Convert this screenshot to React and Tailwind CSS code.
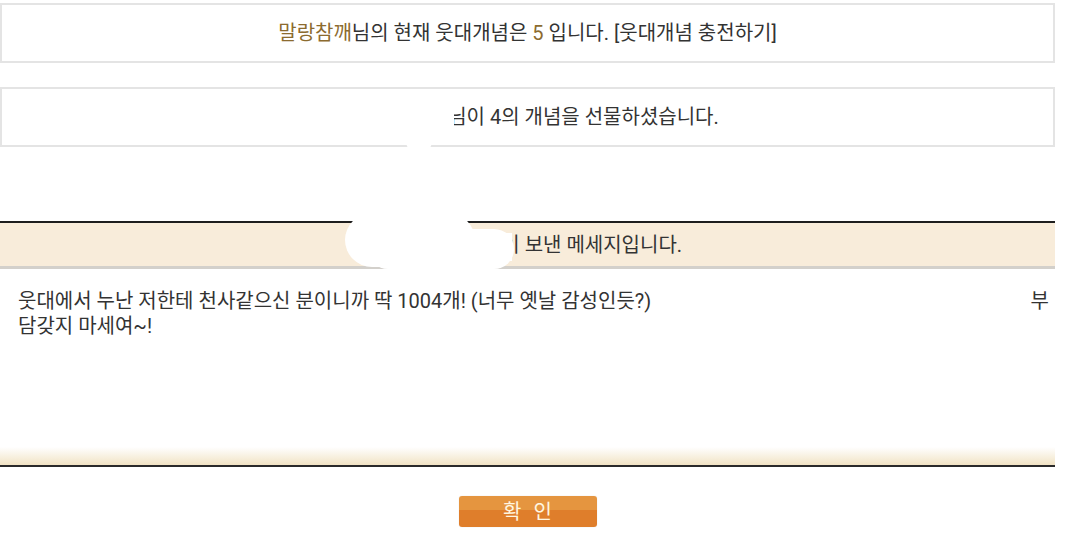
export default function App() {
  const font = { fontFamily: 'Roboto, "Noto Sans CJK KR", "Noto Sans", sans-serif' };
  return (
    <div className="w-[1080px] h-[552px] bg-white overflow-hidden relative text-[#333]" style={font}>
      <div className="w-[1055px] pt-[3px]">
        {/* box 1 */}
        <div className="h-[60px] border-2 border-[#e4e4e4] flex items-center justify-center text-[20px] leading-none">
          <span className="text-[#8c6b2f]">말랑참깨</span>
          <span>님의 현재 웃대개념은&nbsp;</span>
          <span className="text-[#8c6b2f]">5</span>
          <span>&nbsp;입니다. [웃대개념 충전하기]</span>
        </div>

        {/* box 2 */}
        <div className="mt-[24px] h-[60px] border-2 border-[#e4e4e4] flex items-center justify-center text-[20px] leading-none relative">
          <span className="inline-block w-[112px]"></span>
          <span>님이 4의 개념을 선물하셨습니다.</span>
          <div className="absolute left-[330px] top-[6px] w-[122px] h-[44px] bg-white"></div>
          <div className="absolute left-[404px] top-[40px] w-[26px] h-[24px] bg-white rounded-full"></div>
        </div>

        {/* message section */}
        <div className="mt-[74px] relative">
          <div className="border-t-2 border-[#1e1e1e] h-[48px] bg-[#f8ecda] border-b-[3px] border-b-[#d3d0cb] flex items-center justify-center text-[20px] leading-none">
            <span className="inline-block w-[110px]"></span>
            <span>님이 보낸 메세지입니다.</span>
          </div>
          {/* redaction blob */}
          <div className="absolute left-[345px] top-[-8px] w-[130px] h-[54px] bg-white rounded-[40px]"></div>
          <div className="absolute left-[368px] top-[8px] w-[146px] h-[40px] bg-white rounded-[22px]"></div>
          <div className="absolute left-[420px] top-[12px] w-[92px] h-[28px] bg-white"></div>
          <div className="absolute left-[395px] top-[30px] w-[90px] h-[24px] bg-white rounded-full"></div>

          <div className="h-[178px] pt-[20px] pl-[18px] pr-[6px] text-[20px] leading-[25px]">
            <div className="flex">
              <span>웃대에서 누난 저한테 천사같으신 분이니까 딱 1004개! (너무 옛날 감성인듯?)</span>
              <span className="flex-1"></span>
              <span>부</span>
            </div>
            <div>담갖지 마세여~!</div>
          </div>
          <div className="h-[20px] bg-gradient-to-b from-white to-[#f1e3c4] border-b-2 border-[#2a2a2a]"></div>
        </div>

        {/* button */}
        <div className="mt-[29px] flex justify-center">
          <div className="w-[138px] h-[31px] rounded-[3px] overflow-hidden relative flex items-center justify-center shadow-[0_0_1px_rgba(0,0,0,0.2)]">
            <div className="absolute inset-0 flex flex-col">
              <div className="h-[14px] bg-[#e5953f]"></div>
              <div className="flex-1 bg-[#df7e2b]"></div>
            </div>
            <span className="relative text-[#fff6e0] text-[20px] leading-none tracking-[12px] pl-[12px]">확인</span>
          </div>
        </div>
      </div>
    </div>
  );
}
